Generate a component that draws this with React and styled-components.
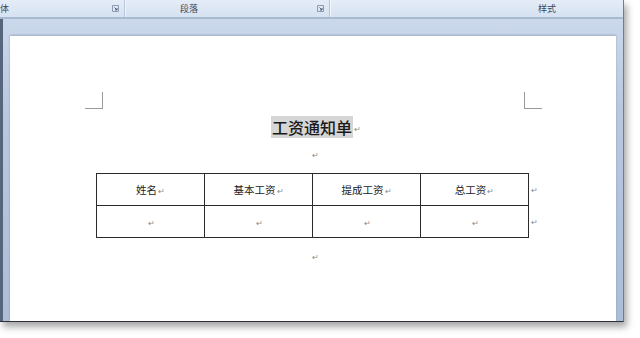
import styled, { createGlobalStyle } from "styled-components";

const Global = createGlobalStyle`
  html, body { margin: 0; padding: 0; background: #ffffff; overflow: hidden; }
  body { font-family: "Noto Sans CJK SC", "Noto Sans", sans-serif; }
`

const Screen = styled.div`
  width: 640px;
  height: 338px;
  background: #ffffff;
`

const Frame = styled.div`
  width: 623px;
  height: 321px;
  display: flex;
  flex-direction: column;
  border-right: 1px solid #6f7d94;
  border-bottom: 1px solid #2e3138;
  box-shadow: 3px 5px 7px rgba(0, 0, 0, 0.35);
  overflow: hidden;
`

const Ribbon = styled.div`
  height: 17px;
  display: flex;
  background: linear-gradient(to bottom, #e4ecf7, #d6e2f2);
  border-bottom: 2px solid #a8b9d2;
  font-size: 9px;
  line-height: 17px;
  color: #3c4658;
`

const Group = styled.div`
  width: ${p => p.$w}px;
  flex-shrink: 0;
  display: flex;
  align-items: center;
  padding-left: ${p => p.$labelLeft}px;
  padding-right: 5px;
  box-sizing: border-box;
  border-right: ${p => (p.$last ? "none" : "1px solid #b7c6da")};
  box-shadow: ${p => (p.$last ? "none" : "1px 0 0 #f2f6fb")};
`

const GroupLabel = styled.span`
  white-space: nowrap;
`

const Launcher = styled.svg`
  margin-left: auto;
  width: 7px;
  height: 7px;
`

const Workspace = styled.div`
  flex: 1;
  display: flex;
  padding: 17px 8px 0 7px;
  background: linear-gradient(to bottom, #cbd8ec, #b9c8df 30%, #adbdd7);
  border-left: 3px solid #56647c;
`

const Page = styled.div`
  flex: 1;
  background: #ffffff;
  padding: 56px 86px 0 86px;
  display: flex;
  flex-direction: column;
  align-items: center;
  box-shadow: 0 -1px 2px rgba(90, 105, 130, 0.4);
`

const MarginRow = styled.div`
  align-self: stretch;
  display: flex;
  justify-content: space-between;
  margin: 0 -12px 0 -11px;
`

const CornerMark = styled.div`
  width: 17px;
  height: 16px;
  border-bottom: 1px solid #9a9a9a;
  ${p => (p.$side === "left" ? "border-right: 1px solid #9a9a9a;" : "border-left: 1px solid #9a9a9a;")}
`

const TitleLine = styled.div`
  margin-top: 7px;
  display: flex;
  align-items: flex-end;
  height: 22px;
  padding-right: 3px;
`

const Title = styled.span`
  background: #d6d6d6;
  color: #1a1a1a;
  font-size: 16px;
  font-weight: 500;
  line-height: 22px;
  padding: 0 0.5px;
`

const Mark = styled.span`
  font-size: 8px;
  line-height: 10px;
  color: #8a8a8a;
  margin-left: 1px;
  margin-bottom: ${p => p.$up || 0}px;
  margin-right: ${p => p.$hang || 0}px;
`

const EmptyPara = styled.div`
  height: ${p => p.$h}px;
  display: flex;
  align-items: flex-end;
  justify-content: center;
  padding-left: 4px;
`

const TableWrap = styled.div`
  margin-top: 13px;
  align-self: stretch;
`

const Table = styled.table`
  width: 434px;
  border-collapse: collapse;
  table-layout: fixed;
`

const Cell = styled.td`
  border: 1px solid #2a2a2a;
  height: 31px;
  padding: 0;
  text-align: center;
  font-size: 10.5px;
  color: #222;
  white-space: nowrap;
`

const RowEnd = styled.td`
  width: 0;
  padding: 0;
  position: relative;
`

const EndMark = styled.span`
  position: absolute;
  left: 2px;
  top: 10px;
  font-size: 8px;
  color: #8a8a8a;
`

const headers = ["姓名", "基本工资", "提成工资", "总工资"];

const LauncherIcon = () => (
  <Launcher viewBox="0 0 7 7">
    <path d="M0.5 0.5h6v6h-6z" fill="none" stroke="#8d9bb0" strokeWidth="1" />
    <path d="M2.5 2.5l2.5 2.5M5 3v2h-2" fill="none" stroke="#55617a" strokeWidth="1" />
  </Launcher>
)

const App = () => {
  return (
    <Screen>
      <Global />
      <Frame>
        <Ribbon>
          <Group $w={125} $labelLeft={0}>
            <GroupLabel>体</GroupLabel>
            <LauncherIcon />
          </Group>
          <Group $w={205} $labelLeft={55}>
            <GroupLabel>段落</GroupLabel>
            <LauncherIcon />
          </Group>
          <Group $w={293} $labelLeft={208} $last>
            <GroupLabel>样式</GroupLabel>
          </Group>
        </Ribbon>
        <Workspace>
          <Page>
            <MarginRow>
              <CornerMark $side="left" />
              <CornerMark $side="right" />
            </MarginRow>
            <TitleLine>
              <Title>工资通知单</Title>
              <Mark $up={4} $hang={-9}>↵</Mark>
            </TitleLine>
            <EmptyPara $h={22}>
              <Mark>↵</Mark>
            </EmptyPara>
            <TableWrap>
              <Table>
                <tbody>
                  <tr>
                    {headers.map(h => (
                      <Cell key={h}>{h}<Mark>↵</Mark></Cell>
                    ))}
                    <RowEnd><EndMark>↵</EndMark></RowEnd>
                  </tr>
                  <tr>
                    {headers.map(h => (
                      <Cell key={h}><Mark>↵</Mark></Cell>
                    ))}
                    <RowEnd><EndMark>↵</EndMark></RowEnd>
                  </tr>
                </tbody>
              </Table>
            </TableWrap>
            <EmptyPara $h={24}>
              <Mark>↵</Mark>
            </EmptyPara>
          </Page>
        </Workspace>
      </Frame>
    </Screen>
  )
}

export default App;
